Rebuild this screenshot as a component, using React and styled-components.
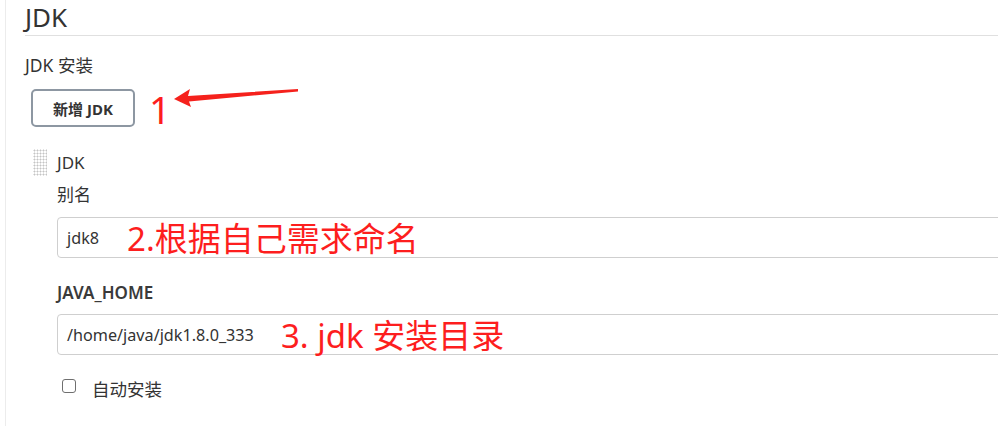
import styled, { createGlobalStyle } from 'styled-components'

const GlobalStyle = createGlobalStyle`
  html, body {
    margin: 0;
    padding: 0;
    background: #fff;
    overflow: hidden;
  }
  body {
    font-family: 'Noto Sans', 'Noto Sans CJK SC', sans-serif;
    color: #333;
  }
`

const Page = styled.div`
  margin-left: 5px;
  height: 100vh;
  padding-left: 19px;
  border-left: 1px solid #ececec;
`

const Title = styled.h2`
  margin: 0;
  padding-bottom: 1px;
  font-size: 26px;
  line-height: 34px;
  font-weight: 400;
  border-bottom: 1px solid #e0e0e0;
`

const SectionLabel = styled.div`
  margin-top: 17px;
  font-size: 17.5px;
  line-height: 24px;
`

const ButtonRow = styled.div`
  display: flex;
  align-items: flex-start;
  margin-top: 12px;
  margin-left: 6px;
`

const AddButton = styled.button`
  width: 104px;
  height: 38px;
  border: 2px solid #8d97a2;
  border-radius: 5px;
  background: #fff;
  color: #333;
  font-family: inherit;
  font-size: 15px;
  font-weight: 700;
  cursor: pointer;
`

// red hand-drawn annotations laid over the screenshot
const Note = styled.span`
  color: #fd1e1e;
  font-family: 'Noto Sans', 'Noto Sans CJK SC', sans-serif;
  font-size: ${(p) => p.$size || 33}px;
  line-height: ${(p) => p.$line || 36}px;
  margin-left: ${(p) => p.$gap || 0}px;
  margin-top: ${(p) => p.$top || 0}px;
  white-space: nowrap;
`

const Arrow = styled.svg`
  margin-top: -4px;
  flex-shrink: 0;
`

const ItemHeader = styled.div`
  display: flex;
  align-items: flex-start;
  margin-top: 21px;
  margin-left: 8px;
`

const DragHandle = styled.span`
  width: 14px;
  height: 27px;
  background-image: radial-gradient(circle, #c4c4c4 0.9px, transparent 1.1px);
  background-size: 3px 3px;
`

const ItemName = styled.span`
  margin-left: 10px;
  margin-top: 2px;
  font-size: 17px;
  line-height: 24px;
`

const ItemBody = styled.div`
  margin-left: 32px;
`

const FieldLabel = styled.div`
  margin-top: ${(p) => p.$top}px;
  font-size: 17px;
  font-weight: ${(p) => (p.$strong ? 600 : 400)};
  line-height: ${(p) => (p.$strong ? 22 : 24)}px;
  color: ${(p) => (p.$strong ? '#3a3a3a' : '#333')};
`

const TextBox = styled.div`
  display: flex;
  align-items: center;
  width: 980px;
  height: 39px;
  margin-top: ${(p) => p.$top}px;
  padding-left: 9px;
  border: 1px solid #cfcfcf;
  border-radius: 4px;
  font-size: 16.2px;
  line-height: 20px;
  color: #333;
`

const CheckRow = styled.label`
  display: flex;
  align-items: flex-start;
  margin-top: 22px;
  margin-left: 5px;
  font-size: 17.5px;
  line-height: 24px;
`

const CheckBox = styled.span`
  box-sizing: border-box;
  width: 14px;
  height: 14px;
  margin-top: 2px;
  margin-right: 16px;
  border: 1.5px solid #6f6f6f;
  border-radius: 3px;
  background: #fff;
`

export default function App() {
  return (
    <>
      <GlobalStyle />
      <Page>
        <Title>JDK</Title>
        <SectionLabel>JDK 安装</SectionLabel>
        <ButtonRow>
          <AddButton>新增 JDK</AddButton>
          <Note $size={38} $line={38} $gap={14} $top={1}>1</Note>
          <Arrow width="130" height="25" viewBox="0 0 130 25">
            <polygon
              points="3,14 19,4 17,11 127,4 127,6.5 18,16.5 20,22"
              fill="#f5211c"
            />
          </Arrow>
        </ButtonRow>
        <ItemHeader>
          <DragHandle />
          <ItemName>JDK</ItemName>
        </ItemHeader>
        <ItemBody>
          <FieldLabel $top={7}>别名</FieldLabel>
          <TextBox $top={10}>
            jdk8
            <Note $gap={28} $top={2}>2.根据自己需求命名</Note>
          </TextBox>
          <FieldLabel $top={24} $strong>JAVA_HOME</FieldLabel>
          <TextBox $top={10}>
            /home/java/jdk1.8.0_333
            <Note $gap={27} $top={2}>3. jdk 安装目录</Note>
          </TextBox>
          <CheckRow>
            <CheckBox />
            自动安装
          </CheckRow>
        </ItemBody>
      </Page>
    </>
  )
}
